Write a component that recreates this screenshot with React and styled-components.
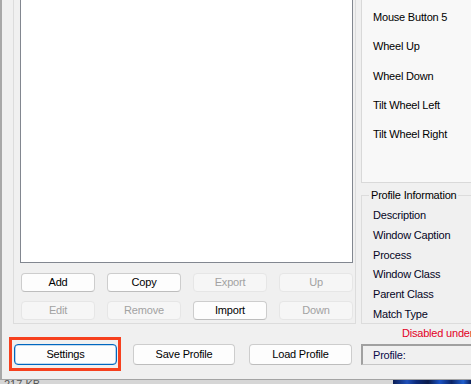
import React from "react";
import styled, { createGlobalStyle } from "styled-components";

const Global = createGlobalStyle`
  html, body { margin: 0; padding: 0; background: #d4d4d4; overflow: hidden; }
  body { font-family: "Liberation Sans", Arial, sans-serif; }
  * { box-sizing: border-box; }
`;

const Screen = styled.div`
  width: 471px;
  height: 384px;
  overflow: hidden;
  position: relative;
`;

const Window = styled.div`
  height: 380px;
  background: #f0f0f0;
  border-left: 2px solid #a8a8a8;
  border-bottom: 1px solid #a4a4a4;
  overflow: hidden;
  font-size: 11px;
  letter-spacing: -0.2px;
  color: #000;
`;

const TopSection = styled.div`
  display: flex;
  height: 324px;
  padding-left: 11px;
  gap: 5px;
`;

const LeftGroup = styled.div`
  width: 343px;
  flex-shrink: 0;
  border: 1px solid #dcdcdc;
  border-top: none;
  padding: 0 2px 3px 6px;
`;

const ListBox = styled.div`
  height: 263px;
  background: #fff;
  border: 1px solid #828790;
  border-top: none;
`;

const ButtonGrid = styled.div`
  margin: 10px 0 0 1px;
  display: grid;
  grid-template-columns: repeat(4, 74px);
  grid-auto-rows: 19px;
  column-gap: 12px;
  row-gap: 9px;
`;

const Btn = styled.button`
  font-family: inherit;
  font-size: 11px;
  letter-spacing: -0.2px;
  padding: 0;
  margin: 0;
  flex-shrink: 0;
  white-space: nowrap;
  width: ${(p) => (p.$w ? p.$w + "px" : "auto")};
  height: ${(p) => (p.$h ? p.$h + "px" : "19px")};
  border-radius: 4px;
  border: 1px solid ${(p) => (p.disabled ? "#e6e6e6" : "#cdcdcd")};
  border-bottom-color: ${(p) => (p.disabled ? "#e6e6e6" : "#bdbdbd")};
  background: ${(p) => (p.disabled ? "#f6f6f6" : "#fdfdfd")};
  color: ${(p) => (p.disabled ? "#a2a2a2" : "#000")};
  line-height: 1;
  cursor: default;
`;

const FocusBtn = styled(Btn)`
  border: 1px solid #0067c0;
  border-bottom-color: #0067c0;
  box-shadow: inset 0 0 0 0.6px rgba(0, 103, 192, 0.45);
`;

const RightColumn = styled.div`
  width: 200px;
  flex-shrink: 0;
  display: flex;
  flex-direction: column;
`;

const MousePanel = styled.div`
  height: 183px;
  background: #f8f8f8;
  border: 1px solid #d9d9d9;
  border-top: none;
  padding: 3px 0 0 11px;
`;

const MouseItem = styled.div`
  line-height: 29.25px;
  font-size: 11px;
  color: #000;
`;

const InfoGroup = styled.div`
  position: relative;
  margin-top: 12px;
  height: 129px;
  border: 1px solid #dcdcdc;
  padding: 10px 0 0 11px;
`;

const GroupLabel = styled.span`
  position: absolute;
  top: -7px;
  left: 7px;
  padding: 0 2px;
  background: #f0f0f0;
  line-height: 13px;
  color: #000;
`;

const InfoItem = styled.div`
  line-height: 19.8px;
  color: #05051e;
`;

const StatusText = styled.div`
  height: 13px;
  padding-left: 400px;
  line-height: 18px;
  color: #e2001f;
  white-space: nowrap;
  font-size: 11px;
`;

const BottomBar = styled.div`
  display: flex;
  align-items: center;
  padding-left: 7px;
`;

const Highlight = styled.div`
  border: 3px solid #f6401e;
  padding: 4px 1px 3px 2px;
  flex-shrink: 0;
`;

const Spacer = styled.div`
  width: ${(p) => p.$w}px;
  flex-shrink: 0;
`;

const ProfileBox = styled.div`
  width: 200px;
  height: 21px;
  flex-shrink: 0;
  border-top: 2px solid #a0a0a0;
  border-left: 2px solid #a0a0a0;
  border-bottom: 1px solid #c6c6c6;
  background: #f0f0f0;
  padding-left: 10px;
  line-height: 18px;
  color: #0a0a48;
`;

const DesktopStrip = styled.div`
  display: flex;
  height: 4px;
  overflow: hidden;
`;

const SizeText = styled.div`
  width: 393px;
  flex-shrink: 0;
  background: #d6d6d6;
  padding-left: 4px;
  font-size: 11px;
  line-height: 9px;
  color: #555;
  overflow: hidden;
  white-space: nowrap;
`;

const Wallpaper = styled.div`
  flex: 1;
  background: linear-gradient(90deg, #0b1d55 0%, #1f4fb8 18%, #0c2a7a 30%, #0a1a4a 45%, #1a52c4 60%, #0b2466 75%, #2060d0 90%, #0b1d55 100%);
`;

const topButtons = [
  { label: "Add" },
  { label: "Copy" },
  { label: "Export", disabled: true },
  { label: "Up", disabled: true },
  { label: "Edit", disabled: true },
  { label: "Remove", disabled: true },
  { label: "Import" },
  { label: "Down", disabled: true },
];

const mouseItems = ["Mouse Button 5", "Wheel Up", "Wheel Down", "Tilt Wheel Left", "Tilt Wheel Right"];
const infoItems = ["Description", "Window Caption", "Process", "Window Class", "Parent Class", "Match Type"];

export default function App() {
  return (
    <Screen>
      <Global />
      <Window>
        <TopSection>
          <LeftGroup>
            <ListBox />
            <ButtonGrid>
              {topButtons.map((b) => (
                <Btn key={b.label} disabled={b.disabled}>
                  {b.label}
                </Btn>
              ))}
            </ButtonGrid>
          </LeftGroup>
          <RightColumn>
            <MousePanel>
              {mouseItems.map((m) => (
                <MouseItem key={m}>{m}</MouseItem>
              ))}
            </MousePanel>
            <InfoGroup>
              <GroupLabel>Profile Information</GroupLabel>
              {infoItems.map((i) => (
                <InfoItem key={i}>{i}</InfoItem>
              ))}
            </InfoGroup>
          </RightColumn>
        </TopSection>
        <StatusText>Disabled under Remote Desktop</StatusText>
        <BottomBar>
          <Highlight>
            <FocusBtn $w={103} $h={21}>Settings</FocusBtn>
          </Highlight>
          <Spacer $w={12} />
          <Btn $w={102} $h={21}>Save Profile</Btn>
          <Spacer $w={14} />
          <Btn $w={103} $h={21}>Load Profile</Btn>
          <Spacer $w={9} />
          <ProfileBox>Profile:</ProfileBox>
        </BottomBar>
      </Window>
      <DesktopStrip>
        <SizeText>217 KB</SizeText>
        <Wallpaper />
      </DesktopStrip>
    </Screen>
  );
}
